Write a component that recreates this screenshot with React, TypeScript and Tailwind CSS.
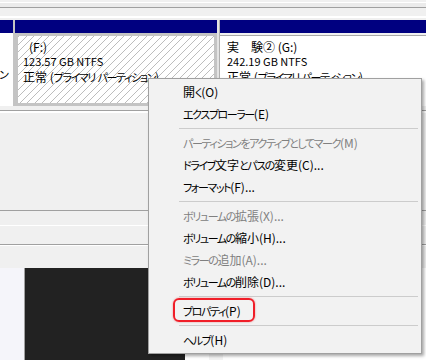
const menuItems: { label?: string; disabled?: boolean; sep?: boolean }[] = [
  { label: "開く(O)" },
  { label: "エクスプローラー(E)" },
  { sep: true },
  { label: "パーティションをアクティブとしてマーク(M)", disabled: true },
  { label: "ドライブ文字とパスの変更(C)..." },
  { label: "フォーマット(F)..." },
  { sep: true },
  { label: "ボリュームの拡張(X)...", disabled: true },
  { label: "ボリュームの縮小(H)..." },
  { label: "ミラーの追加(A)...", disabled: true },
  { label: "ボリュームの削除(D)..." },
  { sep: true },
  { label: "プロパティ(P)" },
  { sep: true },
  { label: "ヘルプ(H)" },
];

// kana in the UI font are narrower than kanji, squeeze them a bit
function Jp({ t }: { t: string }) {
  const parts = t.split(/([\u3041-\u30ff]+)/);
  return (
    <>
      {parts.map((p, i) =>
        i % 2 ? (
          <span key={i} className="text-[11px] tracking-[-1.4px]">
            {p}
          </span>
        ) : (
          p
        )
      )}
    </>
  );
}

export default function App() {
  return (
    <div className="relative w-[426px] h-[360px] overflow-hidden bg-[#f0f0f0] font-['Noto_Sans_CJK_JP',sans-serif] text-[12px] leading-[15px] text-black [font-feature-settings:'palt']">
      {/* toolbar strips */}
      <div className="flex flex-col">
        <div className="h-[2px] bg-[#f0f0f0]" />
        <div className="h-[1px] bg-white" />
        <div className="h-[4px] bg-[#ebebeb]" />
        <div className="h-[1px] bg-[#a0a0a0]" />
        <div className="h-[8px] bg-[#f0f0f0]" />
        <div className="h-[2px] bg-white" />
        <div className="h-[2px] bg-[#f0f0f0]" />
      </div>

      {/* disk row */}
      <div className="flex h-[86px]">
        <div className="w-[13px] flex flex-col overflow-hidden">
          <div className="h-[13px] bg-[#000080]" />
          <div className="flex-1 bg-white pt-[33px] whitespace-nowrap">
            <div className="-ml-[1px]">
              <Jp t="ン" />
            </div>
          </div>
        </div>
        <div className="w-[2px] bg-[#c4c4c4]" />
        <div className="w-[202px] flex flex-col">
          <div className="h-[13px] bg-[#000080]" />
          <div className="flex-1 bg-[#c4c4c4] p-[3px]">
            <div className="h-full bg-[repeating-linear-gradient(-45deg,#ffffff_0,#ffffff_4.4px,#bdbdbd_4.4px,#bdbdbd_5.3px)] pl-[5px] pt-[3px] whitespace-nowrap">
              <div className="pl-[6px]">(F:)</div>
              <div className="text-[11px]">123.57 GB NTFS</div>
              <div>
                <Jp t="正常 (プライマリ パーティション)" />
              </div>
            </div>
          </div>
        </div>
        <div className="w-[3px] flex">
          <div className="w-[2px] bg-[#e4e4e4]" />
          <div className="w-[1px] bg-[#b0b0b0]" />
        </div>
        <div className="flex-1 flex flex-col">
          <div className="h-[13px] bg-[#000080]" />
          <div className="h-[2px] bg-[#f0f0f0]" />
          <div className="h-[1px] bg-[#a8a8a8]" />
          <div className="flex-1 bg-white pl-[7px] pt-[3px] whitespace-nowrap">
            <div>実　験② (G:)</div>
            <div className="text-[11px]">242.19 GB NTFS</div>
            <div>
              <Jp t="正常 (プライマリ パーティション)" />
            </div>
          </div>
        </div>
      </div>

      {/* lower panels */}
      <div className="h-[4px]" />
      <div className="h-[1px] bg-[#a0a0a0]" />
      <div className="h-[2px] bg-white" />
      <div className="h-[97px]" />
      <div className="h-[1px] bg-[#a0a0a0]" />
      <div className="h-[14px]" />
      <div className="h-[1px] bg-white" />
      <div className="h-[18px]" />
      <div className="h-[1px] bg-[#a0a0a0]" />
      <div className="h-[1px] bg-white" />
      <div className="h-[22px]" />

      {/* bottom area */}
      <div className="flex h-[92px]">
        <div className="w-[25px] bg-[#f5f5fa] border-r border-[#a0a0a0]" />
        <div className="w-[160px] bg-[#222222]" />
        <div className="flex-1 bg-white pt-[86px] pl-[24px]">
          <div className="w-[14px] h-[6px] bg-[#f3f3f3]" />
        </div>
      </div>

      {/* context menu */}
      <div className="absolute left-[148px] top-[78px] w-[274px] bg-[#f2f2f2] border border-[#a0a0a0] py-[2px] shadow-[2px_2px_3px_rgba(0,0,0,0.35)]">
        {menuItems.map((it, i) =>
          it.sep ? (
            <div key={i} className="h-[7px] flex items-center ml-[30px] mr-[3px]">
              <div className="h-[1px] w-full bg-[#cccccc]" />
            </div>
          ) : (
            <div
              key={i}
              className={
                "h-[22px] flex items-center pl-[34px] whitespace-nowrap " +
                (it.disabled ? "text-[#808080]" : "text-black")
              }
            >
              <span>
                <Jp t={it.label ?? ""} />
              </span>
            </div>
          )
        )}
      </div>

      {/* highlight */}
      <div className="absolute left-[173px] top-[298px] w-[82px] h-[24px] border-2 border-[#f01e28] rounded-[6px] shadow-[0_0_2px_rgba(220,0,0,0.45)]" />
    </div>
  );
}
